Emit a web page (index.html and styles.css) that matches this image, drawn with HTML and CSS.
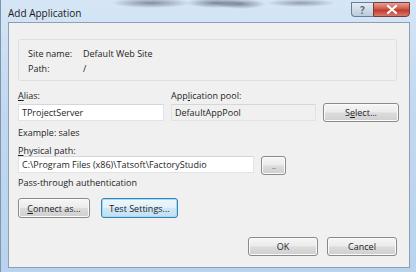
FILE: index.html
```html
<!DOCTYPE html>
<html lang="en">
<head>
  <meta charset="UTF-8">
  <title>Add Application</title>
  <link rel="stylesheet" href="styles.css">
</head>
<body>
  <div class="window">
    <div class="titlebar">
      <span class="title">Add Application</span>
      <div class="caption-btns">
        <span class="cap-btn help">?</span>
        <span class="cap-btn close">
          <svg width="12" height="9" viewBox="0 0 12 9"><path d="M2 1 L10 8 M10 1 L2 8" stroke="#fff" stroke-width="2.2" stroke-linecap="round"/></svg>
        </span>
      </div>
    </div>
    <div class="client">
      <div class="group">
        <div class="info-row"><span class="info-label">Site name:</span><span>Default Web Site</span></div>
        <div class="info-row"><span class="info-label">Path:</span><span>/</span></div>
      </div>

      <div class="grid">
        <label class="lbl"><u>A</u>lias:</label>
        <label class="lbl">App<u>l</u>ication pool:</label>
        <span></span>
        <div class="field">TProjectServer</div>
        <div class="field readonly">DefaultAppPool</div>
        <button class="btn">S<u>e</u>lect...</button>
      </div>
      <div class="hint">Example: sales</div>

      <label class="lbl path-lbl"><u>P</u>hysical path:</label>
      <div class="path-row">
        <div class="field path">C:\Program Files (x86)\Tatsoft\FactoryStudio</div>
        <button class="btn browse">...</button>
      </div>
      <div class="hint">Pass-through authentication</div>

      <div class="auth-row">
        <button class="btn connect"><u>C</u>onnect as...</button>
        <button class="btn test focus">Test Settings...</button>
      </div>

      <div class="footer">
        <button class="btn dlg">OK</button>
        <button class="btn dlg">Cancel</button>
      </div>
    </div>
  </div>
</body>
</html>
```

FILE: styles.css
```css
* {
  margin: 0;
  padding: 0;
  box-sizing: border-box;
}

body {
  width: 416px;
  height: 272px;
  overflow: hidden;
  font-family: 'Open Sans', 'Noto Sans', sans-serif;
  font-size: 9px;
  color: #1e1e1e;
  background: #b9d1ea;
}

.window {
  height: 272px;
  padding: 0 6px 4px 7px;
  background:
    radial-gradient(ellipse 40px 5px at 150px 3px, rgba(60, 70, 90, 0.55), transparent),
    radial-gradient(ellipse 30px 5px at 215px 3px, rgba(60, 70, 90, 0.6), transparent),
    radial-gradient(ellipse 25px 5px at 240px 4px, rgba(60, 70, 90, 0.55), transparent),
    radial-gradient(ellipse 35px 4px at 300px 3px, rgba(60, 70, 90, 0.45), transparent),
    linear-gradient(180deg, #d6e6f6 0%, #c1d8f0 40%, #b9d3ee 100%);
  border-left: 1px solid #7f95ad;
  display: flex;
  flex-direction: column;
}

.titlebar {
  height: 22px;
  display: flex;
  align-items: center;
  justify-content: space-between;
  padding-top: 3px;
}

.title {
  font-size: 10px;
  color: #1a1a1a;
}

.caption-btns {
  display: flex;
  align-self: flex-start;
  margin-top: -1px;
}

.cap-btn {
  height: 15px;
  display: flex;
  align-items: center;
  justify-content: center;
  border: 1px solid #6b7d92;
}

.help {
  width: 22px;
  border-radius: 0 0 0 4px;
  border-right: none;
  background: linear-gradient(180deg, #e3ebf4, #bccadb);
  color: #5d6f84;
  font-size: 10px;
  font-weight: 700;
}

.close {
  width: 37px;
  border-radius: 0 0 4px 0;
  background: linear-gradient(180deg, #e3a497 0%, #d1574a 45%, #c13a2c 55%, #d8796c 100%);
  border-color: #7a3a34;
}

.client {
  flex: 1;
  background: #f0f0f0;
  border: 1px solid #8e9fb3;
  padding: 16px 12px 0 9px;
  display: flex;
  flex-direction: column;
}

.group {
  height: 42px;
  border: 1px solid #dfdfdf;
  border-radius: 3px;
  padding: 8px 0 0 9px;
  display: flex;
  flex-direction: column;
  gap: 3px;
}

.info-row {
  display: flex;
  line-height: 12px;
}

.info-label {
  width: 55px;
}

.grid {
  display: grid;
  grid-template-columns: 146px 145px 76px;
  column-gap: 7px;
  row-gap: 2px;
  margin-top: 9px;
}

.lbl {
  line-height: 12px;
}

.field {
  height: 17px;
  line-height: 15px;
  padding-left: 3px;
  border: 1px solid #e2e3e4;
  border-top-color: #d5d6d8;
  background: #fff;
  white-space: nowrap;
  overflow: hidden;
}

.field.readonly {
  background: #f0f0f0;
}

.btn {
  font: inherit;
  color: #1e1e1e;
  height: 19px;
  border: 1px solid #8a8a8a;
  border-radius: 3px;
  background: linear-gradient(180deg, #f6f6f6 0%, #ebebeb 48%, #dcdcdc 52%, #cfcfcf 100%);
  box-shadow: inset 0 0 0 1px #fbfbfb;
}

.grid .btn {
  margin-top: -1px;
}

.hint {
  line-height: 12px;
  margin-top: 5px;
}

.path-lbl {
  margin-top: 6px;
}

.path-row {
  display: flex;
  align-items: flex-start;
  gap: 7px;
  margin-top: -1px;
}

.field.path {
  width: 236px;
}

.browse {
  width: 25px;
  font-size: 8px;
  color: #777;
  letter-spacing: -1px;
}

.path-row + .hint {
  margin-top: 2px;
}

.auth-row {
  display: flex;
  gap: 11px;
  margin-top: 9px;
}

.connect {
  width: 72px;
  height: 20px;
}

.test {
  width: 77px;
  height: 20px;
}

.focus {
  border-color: #3c7fb1;
  box-shadow: inset 0 0 0 1px #9fdcf5;
  background: linear-gradient(180deg, #eef7fc 0%, #e1f0f9 48%, #cfe7f5 52%, #c2e0f3 100%);
}

.footer {
  display: flex;
  justify-content: flex-end;
  gap: 9px;
  margin-top: 19px;
}

.dlg {
  width: 70px;
}
```
